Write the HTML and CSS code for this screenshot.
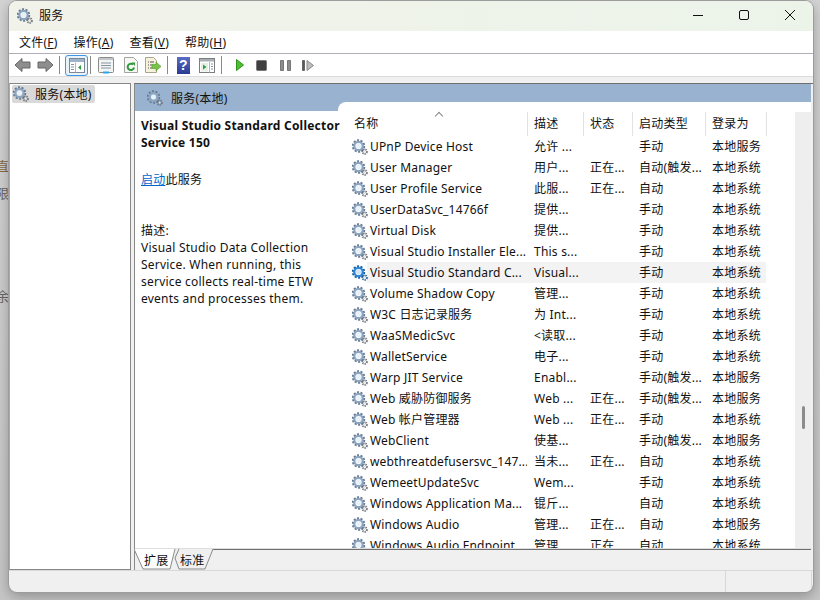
FILE: index.html
```html
<!DOCTYPE html>
<html lang="zh">
<head>
  <meta charset="UTF-8">
  <title>服务</title>
  <link rel="stylesheet" href="styles.css">
</head>
<body>
  <svg class="defs" width="0" height="0">
    <symbol id="gear" viewBox="0 0 16 16">
      <circle cx="6.500" cy="7" r="5.500" fill="none" stroke="#66788f" stroke-width="2.400" stroke-dasharray="2 1.400"/>
      <circle cx="6.500" cy="7" r="4.200" fill="none" stroke="#8ba4c0" stroke-width="2.200"/>
      <circle cx="6.500" cy="7" r="2.500" fill="#e8f1fa"/>
      <circle cx="12.600" cy="12.600" r="2.300" fill="none" stroke="#6f757c" stroke-width="1.900" stroke-dasharray="1.300 .8"/>
      <circle cx="12.600" cy="12.600" r=".9" fill="#dfe3e7"/>
    </symbol>
    <symbol id="gear_on" viewBox="0 0 16 16">
      <circle cx="6.500" cy="7" r="5.500" fill="none" stroke="#15609f" stroke-width="2.400" stroke-dasharray="2 1.400"/>
      <circle cx="6.500" cy="7" r="4.200" fill="none" stroke="#2f86d8" stroke-width="2.200"/>
      <circle cx="6.500" cy="7" r="2.500" fill="#cfe5fa"/>
      <circle cx="12.600" cy="12.600" r="2.300" fill="none" stroke="#2f6497" stroke-width="1.900" stroke-dasharray="1.300 .8"/>
      <circle cx="12.600" cy="12.600" r=".9" fill="#dfe3e7"/>
    </symbol>
  </svg>

  <div class="desk_word word_a">直</div>
  <div class="desk_word word_b">限</div>
  <div class="desk_word word_c">余</div>

  <div class="window">
    <div class="titlebar">
      <svg class="gear"><use href="#gear"/></svg>
      <span class="title_text">服务</span>
      <div class="caption">
        <svg width="46" height="30" viewBox="0 0 46 30"><path d="M18 14.500h10" stroke="#111" fill="none"/></svg>
        <svg width="46" height="30" viewBox="0 0 46 30"><rect x="18.500" y="9.500" width="9" height="9" rx="1.500" stroke="#111" fill="none"/></svg>
        <svg width="46" height="30" viewBox="0 0 46 30"><path d="M18 9l10 10M28 9L18 19" stroke="#111" fill="none"/></svg>
      </div>
    </div>

    <div class="menubar">
      <span class="menu_item">文件(<u>F</u>)</span>
      <span class="menu_item">操作(<u>A</u>)</span>
      <span class="menu_item">查看(<u>V</u>)</span>
      <span class="menu_item">帮助(<u>H</u>)</span>
    </div>

    <div class="toolbar">
      <svg class="tool tool_back" width="17" height="16" viewBox="0 0 17 16"><path d="M1 8l7-6.500v3.500h8v6H8v3.500z" fill="#8e8e8e" stroke="#666"/></svg>
      <svg class="tool tool_next" width="17" height="16" viewBox="0 0 17 16"><path d="M16 8L9 1.500v3.500H1v6h8v3.500z" fill="#8e8e8e" stroke="#666"/></svg>
      <i class="tool_sep sep_a"></i>
      <span class="tool_on">
        <svg width="16" height="15" viewBox="0 0 16 15"><rect x=".5" y=".5" width="15" height="14" fill="#fff" stroke="#7b8793"/><path d="M1 1h14v3H1z" fill="#9db3c9"/><path d="M6.500 4.500v10" stroke="#aab4bd"/><path d="M2 6.500h3M2 9h3M2 11.500h3" stroke="#7f94a8"/><path d="M12 7v5L9 9.500z" fill="#2f9d3a"/></svg>
      </span>
      <i class="tool_sep sep_b"></i>
      <svg class="tool tool_prop" width="16" height="17" viewBox="0 0 16 17"><rect x=".5" y=".5" width="15" height="15" rx="1" fill="#f4f4f4" stroke="#8b8b8b"/><path d="M1 1h14v2H1z" fill="#c3c7cc"/><path d="M3 6h10M3 8.500h10M3 11h10" stroke="#8795a3"/><path d="M5 15.500h6" stroke="#2aa7e8" stroke-width="2"/></svg>
      <svg class="tool tool_refresh" width="14" height="16" viewBox="0 0 14 16"><path d="M.5.500h9l4 4v11H.5z" fill="#f7f7f4" stroke="#a3a3a3"/><path d="M10 10.500a3.200 3.200 0 1 1-1-3" fill="none" stroke="#2e9a3c" stroke-width="2"/><path d="M7.500 5.500h3.500v3.500z" fill="#2e9a3c"/></svg>
      <svg class="tool tool_export" width="17" height="16" viewBox="0 0 17 16"><path d="M.5.500h8l3 3v12H.5z" fill="#f7f2dc" stroke="#a8a48f"/><path d="M3 5h1M5 5h4M3 8h1M5 8h2M3 11h1M5 11h2" stroke="#555"/><path d="M7 7.500h4V5l5 4.500-5 4.500v-2.500H7z" fill="#7bc24a" stroke="#4d9a2e" stroke-width=".6"/></svg>
      <i class="tool_sep sep_c"></i>
      <span class="tool_help">?</span>
      <svg class="tool tool_view" width="16" height="15" viewBox="0 0 16 15"><rect x=".5" y=".5" width="15" height="14" fill="#fff" stroke="#7d7d7d"/><path d="M1 1h14v2.500H1z" fill="#a8aeb4"/><path d="M2 5h7v8.500H2z" fill="#e7eee3"/><path d="M10.500 4v10.500" stroke="#aab4bd"/><path d="M4 6.500v5l3.500-2.500z" fill="#2f9d3a"/><path d="M12 6h2M12 8.500h2M12 11h2" stroke="#7f94a8"/></svg>
      <i class="tool_sep sep_d"></i>
      <svg class="tool tool_play" width="8" height="12" viewBox="0 0 8 12"><path d="M.5.500L7.500 6 .5 11.500z" fill="#4cc02e" stroke="#2f8f1d"/></svg>
      <svg class="tool tool_stop" width="11" height="11" viewBox="0 0 11 11"><rect x=".5" y=".5" width="10" height="10" rx="1" fill="#3f3f3f" stroke="#777"/></svg>
      <svg class="tool tool_pause" width="11" height="11" viewBox="0 0 11 11"><path d="M.5.500h3v10h-3zM7.500.500h3v10h-3z" fill="#8c8c8c" stroke="#777"/></svg>
      <svg class="tool tool_resume" width="12" height="11" viewBox="0 0 12 11"><path d="M.5.500h2v10h-2z" fill="#5a5a5a" stroke="#666"/><path d="M5 .5l6.500 5L5 10.500z" fill="#bdbdbd" stroke="#8a8a8a"/></svg>
    </div>

    <div class="main">
      <div class="tree">
        <div class="tree_item"><svg class="gear"><use href="#gear"/></svg><span>服务(本地)</span></div>
      </div>

      <div class="content">
        <div class="content_head"><svg class="gear"><use href="#gear"/></svg><span>服务(本地)</span></div>
        <div class="content_body">
          <div class="detail">
            <div class="detail_name">Visual Studio Standard Collector Service 150</div>
            <div class="detail_action"><a href="#">启动</a>此服务</div>
            <div class="detail_desc">描述:<br>Visual Studio Data Collection Service. When running, this service collects real-time ETW events and processes them.</div>
          </div>

          <div class="list">
            <div class="list_main">
              <div class="sort_mark"></div>
              <div class="list_row list_head">
                <span>名称</span><span>描述</span><span>状态</span><span>启动类型</span><span>登录为</span>
              </div>
              <div class="list_rows">
                <div class="list_row"><span><svg class="gear"><use href="#gear"/></svg>UPnP Device Host</span><span>允许 ...</span><span></span><span>手动</span><span>本地服务</span></div>
                <div class="list_row"><span><svg class="gear"><use href="#gear"/></svg>User Manager</span><span>用户...</span><span>正在...</span><span>自动(触发...</span><span>本地系统</span></div>
                <div class="list_row"><span><svg class="gear"><use href="#gear"/></svg>User Profile Service</span><span>此服...</span><span>正在...</span><span>自动</span><span>本地系统</span></div>
                <div class="list_row"><span><svg class="gear"><use href="#gear"/></svg>UserDataSvc_14766f</span><span>提供...</span><span></span><span>手动</span><span>本地系统</span></div>
                <div class="list_row"><span><svg class="gear"><use href="#gear"/></svg>Virtual Disk</span><span>提供...</span><span></span><span>手动</span><span>本地系统</span></div>
                <div class="list_row"><span><svg class="gear"><use href="#gear"/></svg>Visual Studio Installer Ele...</span><span>This s...</span><span></span><span>手动</span><span>本地系统</span></div>
                <div class="list_row row_selected"><span><svg class="gear"><use href="#gear_on"/></svg>Visual Studio Standard C...</span><span>Visual...</span><span></span><span>手动</span><span>本地系统</span></div>
                <div class="list_row"><span><svg class="gear"><use href="#gear"/></svg>Volume Shadow Copy</span><span>管理...</span><span></span><span>手动</span><span>本地系统</span></div>
                <div class="list_row"><span><svg class="gear"><use href="#gear"/></svg>W3C 日志记录服务</span><span>为 Int...</span><span></span><span>手动</span><span>本地系统</span></div>
                <div class="list_row"><span><svg class="gear"><use href="#gear"/></svg>WaaSMedicSvc</span><span>&lt;读取...</span><span></span><span>手动</span><span>本地系统</span></div>
                <div class="list_row"><span><svg class="gear"><use href="#gear"/></svg>WalletService</span><span>电子...</span><span></span><span>手动</span><span>本地系统</span></div>
                <div class="list_row"><span><svg class="gear"><use href="#gear"/></svg>Warp JIT Service</span><span>Enabl...</span><span></span><span>手动(触发...</span><span>本地服务</span></div>
                <div class="list_row"><span><svg class="gear"><use href="#gear"/></svg>Web 威胁防御服务</span><span>Web ...</span><span>正在...</span><span>手动(触发...</span><span>本地服务</span></div>
                <div class="list_row"><span><svg class="gear"><use href="#gear"/></svg>Web 帐户管理器</span><span>Web ...</span><span>正在...</span><span>手动</span><span>本地系统</span></div>
                <div class="list_row"><span><svg class="gear"><use href="#gear"/></svg>WebClient</span><span>使基...</span><span></span><span>手动(触发...</span><span>本地服务</span></div>
                <div class="list_row"><span><svg class="gear"><use href="#gear"/></svg>webthreatdefusersvc_147...</span><span>当未...</span><span>正在...</span><span>自动</span><span>本地系统</span></div>
                <div class="list_row"><span><svg class="gear"><use href="#gear"/></svg>WemeetUpdateSvc</span><span>Wem...</span><span></span><span>手动</span><span>本地系统</span></div>
                <div class="list_row"><span><svg class="gear"><use href="#gear"/></svg>Windows Application Ma...</span><span>锟斤...</span><span></span><span>自动</span><span>本地系统</span></div>
                <div class="list_row"><span><svg class="gear"><use href="#gear"/></svg>Windows Audio</span><span>管理...</span><span>正在...</span><span>自动</span><span>本地服务</span></div>
                <div class="list_row"><span><svg class="gear"><use href="#gear"/></svg>Windows Audio Endpoint</span><span>管理...</span><span>正在...</span><span>自动</span><span>本地系统</span></div>
              </div>
            </div>
            <div class="scrollbar"><div class="scroll_thumb"></div></div>
          </div>
        </div>

        <div class="tabs">
          <svg class="tab_shape" width="82" height="21" viewBox="0 0 82 21">
            <path d="M41 0h38l-8 20H45l-4-11z" fill="#f0f0f0"/>
            <path d="M45 0l-4 9 4 11h26l8-20" fill="none" stroke="#8a8a8a"/>
            <path d="M0 0l9 20h27l5-20z" fill="#fff"/>
            <path d="M0 0l9 20h27l5-20" fill="none" stroke="#8a8a8a"/>
          </svg>
          <span class="tab tab_a">扩展</span>
          <span class="tab tab_b">标准</span>
        </div>
      </div>
    </div>

    <div class="statusbar"><i></i><i></i></div>
  </div>
</body>
</html>
```

FILE: styles.css
```css
* {
  box-sizing: border-box;
}
html, body {
  margin: 0;
  height: 100%;
}
body {
  position: relative;
  overflow: hidden;
  padding: 1px 7px 8px 9px;
  background: linear-gradient(#d4d4d4, #c6c6c6);
  font: 12px "Noto Sans", "Noto Sans CJK SC", sans-serif;
  letter-spacing: 0.22px;
  color: #111;
}
.defs {
  position: absolute;
}
.desk_word {
  position: absolute;
  left: -4px;
  font-size: 13px;
  color: #666;
}
.word_a { top: 156px; color: #8a6a3f; }
.word_b { top: 183px; }
.word_c { top: 286px; }

.window {
  position: relative;
  display: flex;
  flex-direction: column;
  height: 100%;
  background: #f0f0f0;
  border-radius: 8px;
  overflow: hidden;
  box-shadow: 0 0 0 1px #9c9c9c, 0 4px 14px rgba(0,0,0,0.3);
}
.gear {
  width: 16px;
  height: 16px;
  flex: none;
}

.titlebar {
  display: flex;
  align-items: center;
  height: 30px;
  padding: 0 0 1px 8px;
  background: linear-gradient(90deg, #f1f2ea, #ecf4ea);
}
.title_text {
  margin: 0 0 2px 6px;
}
.caption {
  display: flex;
  align-self: flex-start;
  margin-left: auto;
}

.menubar {
  display: flex;
  gap: 16px;
  height: 23px;
  padding: 2px 0 0 10px;
  background: #fff;
  border-bottom: 1px solid #b1aeb9;
  line-height: 19px;
}

.toolbar {
  display: flex;
  align-items: center;
  height: 22px;
  background: #fff;
}
.tool {
  flex: none;
}
.tool_back { margin-left: 5px; }
.tool_next { margin-left: 6px; }
.tool_sep {
  flex: none;
  width: 1px;
  height: 18px;
  background: #8a8a8a;
}
.sep_a { margin: 0 5px 0 5px; }
.sep_b { margin: 0 7px 0 2px; }
.sep_c { margin: 0 9px 0 5px; }
.sep_d { margin: 0 14px 0 6px; }
.tool_on {
  display: flex;
  align-items: center;
  justify-content: center;
  flex: none;
  width: 23px;
  height: 21px;
  background: #e8f2fb;
  border: 1px solid #3f97e4;
  border-radius: 3px;
}
.tool_prop { margin-right: 10px; }
.tool_refresh { margin-right: 7px; }
.tool_help {
  flex: none;
  width: 13px;
  height: 17px;
  margin-right: 9px;
  background: linear-gradient(#5a6cc4, #2a3a94);
  color: #fff;
  font: bold 14px/17px "Liberation Sans", sans-serif;
  text-align: center;
}
.tool_stop { margin: 0 13px 0 12px; }
.tool_pause { margin-right: 11px; }

.main {
  flex: 1;
  display: flex;
  gap: 3px;
  min-height: 0;
  padding-top: 6px;
  border-top: 1px solid #dcdcdc;
}
.tree {
  flex: none;
  width: 122px;
  padding: 1px 2px;
  background: #fff;
  border: 1px solid #888;
  border-left-color: #aaa;
}
.tree_item {
  display: inline-flex;
  align-items: center;
  gap: 6px;
  height: 18px;
  padding: 0 3px 0 1px;
  background: #d9d9d9;
  border-radius: 2px;
}

.content {
  flex: 1;
  display: flex;
  flex-direction: column;
  min-width: 0;
  border-left: 1px solid #8a8a8a;
  border-top: 1px solid #6f6f6f;
  padding-right: 2px;
}
.content_head {
  display: flex;
  align-items: center;
  gap: 8px;
  height: 27px;
  padding-left: 12px;
  background: #98b2cf;
}
.content_body {
  flex: 1;
  display: flex;
  min-height: 0;
  margin-top: -9px;
  border-bottom: 1px solid #dedede;
}
.detail {
  flex: none;
  width: 203px;
  margin-top: 9px;
  padding: 6px 0 0 6px;
  background: #fff;
  line-height: 17px;
}
.detail_name {
  position: relative;
  z-index: 1;
  width: 204px;
  font-weight: bold;
}
.detail_action {
  margin-top: 20px;
}
.detail_action a {
  color: #0066cc;
}
.detail_desc {
  margin-top: 34px;
  width: 185px;
}

.list {
  position: relative;
  flex: 1;
  display: flex;
  min-width: 0;
  background: #fff;
  border-top-left-radius: 8px;
}
.list_main {
  flex: 1;
  min-width: 0;
  display: flex;
  flex-direction: column;
  padding-top: 10px;
}
.sort_mark {
  position: absolute;
  left: 98px;
  top: 11px;
  width: 6px;
  height: 6px;
  border-left: 1px solid #888;
  border-top: 1px solid #888;
  transform: rotate(45deg);
}
.list_row {
  display: grid;
  grid-template-columns: 189px 56px 49px 73px 61px;
  height: 21px;
  line-height: 21px;
  white-space: nowrap;
}
.list_row span {
  display: flex;
  align-items: center;
  padding-left: 7px;
  overflow: hidden;
}
.list_row span:first-child {
  padding-left: 14px;
  gap: 2px;
  letter-spacing: 0.17px;
}
.list_head {
  height: 24px;
  line-height: 24px;
}
.list_head span {
  border-right: 1px solid #e2e2e2;
  margin-right: -1px;
}
.list_head span:first-child {
  padding-left: 16px;
}
.list_rows {
  flex: 1;
  min-height: 0;
  overflow: hidden;
}
.row_selected {
  background: linear-gradient(90deg, #fff 29px, #f3f3f3 29px, #f3f3f3 428px, #fff 428px);
}
.scrollbar {
  flex: none;
  width: 16px;
  margin-top: 10px;
  padding: 294px 0 0 7px;
  background: #eee;
}
.scroll_thumb {
  width: 3px;
  height: 23px;
  background: #8b8b8b;
  border-radius: 2px;
}

.tabs {
  position: relative;
  flex: none;
  height: 21px;
  margin-left: -1px;
  border-top: 1px solid #6f6f6f;
}
.tab_shape {
  position: absolute;
  left: 0;
  top: -1px;
}
.tab {
  position: absolute;
  top: 0;
  line-height: 21px;
}
.tab_a { left: 10px; }
.tab_b { left: 46px; }

.statusbar {
  display: flex;
  flex: none;
  height: 22px;
  border-top: 1px solid #d8d8d8;
}
.statusbar i {
  display: block;
  width: 1px;
  height: 21px;
  background: #d8d8d8;
}
.statusbar i:first-child {
  margin-left: 716px;
}
.statusbar i:last-child {
  margin-left: 85px;
}
```
